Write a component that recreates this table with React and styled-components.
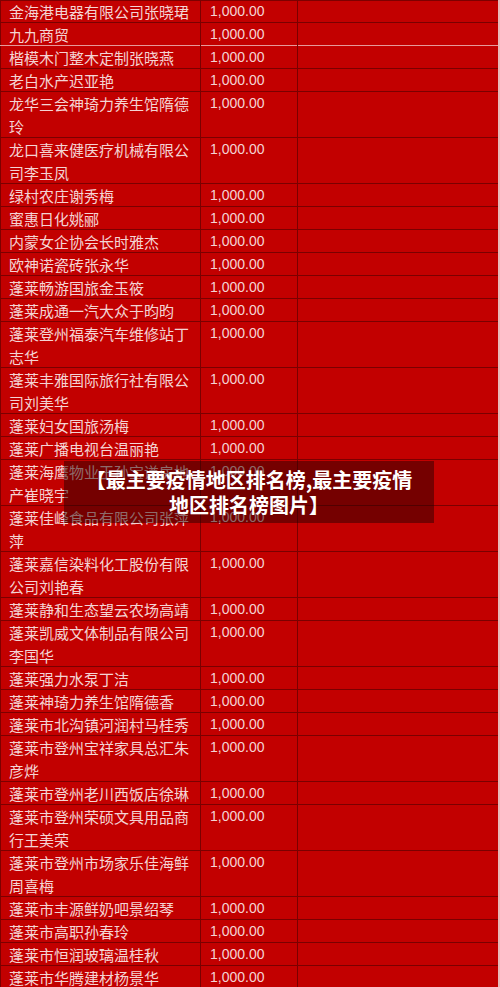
import styled, { createGlobalStyle } from "styled-components";

const GlobalStyle = createGlobalStyle`
    html, body {
        margin: 0;
        padding: 0;
        background: #c20000;
        overflow: hidden;
    }
    body {
        font-family: "Noto Sans CJK SC", sans-serif;
    }
`;

const Page = styled.div`
    position: relative;
    width: 500px;
    height: 987px;
    overflow: hidden;
    background: #c20000;
`;

const Table = styled.div`
    width: 498px;
    border-right: 2px solid #e9b9b9;
    box-shadow: inset 1px 1px 0 #7d0000;
`;

const Row = styled.div`
    display: grid;
    grid-template-columns: 201px 97px 200px;
    box-shadow: inset 0 -1px 0 ${(props) => (props.light ? "#e59a9a" : "#7a0000")};
`;

const Cell = styled.div`
    padding: 0 8px 0 9px;
    line-height: 23px;
    color: #f4d4d4;
    font-family: ${(props) => (props.num ? `"Liberation Sans", sans-serif` : `"Noto Sans CJK SC", sans-serif`)};
    font-size: ${(props) => (props.num ? "14px" : "15px")};
    word-break: break-all;
    &:not(:last-child) {
        box-shadow: inset -1px 0 0 #7a0000;
    }
`;

const Caption = styled.div`
    position: absolute;
    left: 64px;
    top: 461px;
    width: 370px;
    padding: 6px 0;
    box-sizing: border-box;
    background: rgba(40, 0, 0, 0.5);
    color: #ffffff;
    font-family: "Noto Sans CJK SC", sans-serif;
    font-weight: 700;
    font-size: 20px;
    line-height: 25px;
    text-align: center;
`;

const names = [
    "金海港电器有限公司张晓珺",
    "九九商贸",
    "楷模木门整木定制张晓燕",
    "老白水产迟亚艳",
    "龙华三会神琦力养生馆隋德玲",
    "龙口喜来健医疗机械有限公司李玉凤",
    "绿村农庄谢秀梅",
    "蜜惠日化姚郦",
    "内蒙女企协会长时雅杰",
    "欧神诺瓷砖张永华",
    "蓬莱畅游国旅金玉筱",
    "蓬莱成通一汽大众于昀昀",
    "蓬莱登州福泰汽车维修站丁志华",
    "蓬莱丰雅国际旅行社有限公司刘美华",
    "蓬莱妇女国旅汤梅",
    "蓬莱广播电视台温丽艳",
    "蓬莱海鹰物业王孙宝谦房地产崔晓宇",
    "蓬莱佳峰食品有限公司张萍萍",
    "蓬莱嘉信染料化工股份有限公司刘艳春",
    "蓬莱静和生态望云农场高靖",
    "蓬莱凯威文体制品有限公司李国华",
    "蓬莱强力水泵丁洁",
    "蓬莱神琦力养生馆隋德香",
    "蓬莱市北沟镇河润村马桂秀",
    "蓬莱市登州宝祥家具总汇朱彦烨",
    "蓬莱市登州老川西饭店徐琳",
    "蓬莱市登州荣硕文具用品商行王美荣",
    "蓬莱市登州市场家乐佳海鲜周喜梅",
    "蓬莱市丰源鲜奶吧景绍琴",
    "蓬莱市高职孙春玲",
    "蓬莱市恒润玻璃温桂秋",
    "蓬莱市华腾建材杨景华",
];

const App = () => {
    return (
        <Page>
            <GlobalStyle />
            <Table>
                {names.map((name, i) => (
                    <Row key={name} light={i === 1}>
                        <Cell>{name}</Cell>
                        <Cell num>1,000.00</Cell>
                        <Cell />
                    </Row>
                ))}
            </Table>
            <Caption>
                【最主要疫情地区排名榜,最主要疫情
                <br />
                地区排名榜图片】
            </Caption>
        </Page>
    );
};

export default App;
